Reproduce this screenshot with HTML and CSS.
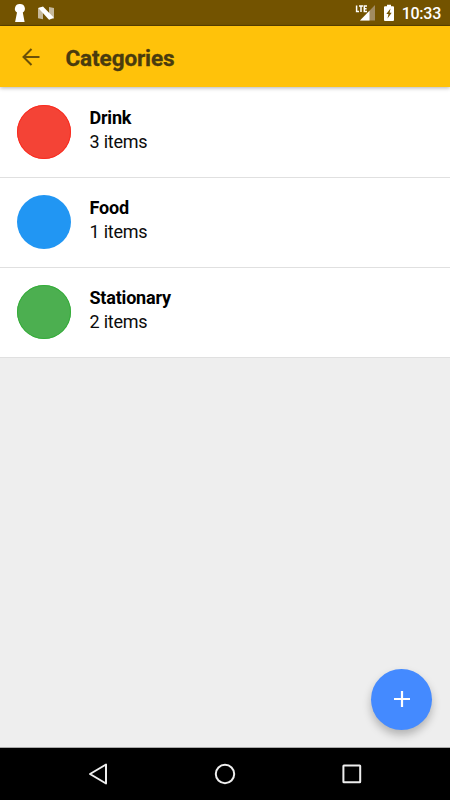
FILE: index.html
```html
<!DOCTYPE html>
<html lang="en">
<head>
<meta charset="utf-8">
<title>Categories</title>
<link rel="stylesheet" href="styles.css">
</head>
<body>
<div class="screen">
  <div class="status">
    <svg class="notices" width="60" height="26" viewBox="0 0 60 26">
      <path fill="#fff" d="M20 4a4.700 4.700 0 0 1 2.800 8.600L24.600 22H15.100L17 12.600A4.700 4.700 0 0 1 20 4z"/>
      <path fill="#c6b99c" d="M38 8l5-1v12.300l-5-1zM49 7l5 1v10.600l-5 1z"/>
      <path fill="#fff" d="M38.300 8L43 6.400 53.700 17.500 49 19.800z"/>
    </svg>
    <div class="indicators">
      <svg width="46" height="26" viewBox="0 0 46 26">
        <path fill="#a18b61" d="M21 5v15.500H6z"/>
        <path fill="#fff" d="M15.500 10.700v9.800H6z"/>
        <path fill="none" stroke="#fff" stroke-width="1.500" d="M2.600 5.500v6H5M5 6.100h4M7 6v6M13 6.100h-2.700v5.300H13M10.300 8.700h2.300"/>
        <path fill="#fff" fill-rule="evenodd" d="M33 4.700h4v1.500h2q1 0 1 1v12.800q0 1-1 1h-8q-1 0-1-1V7.200q0-1 1-1h2zM36.500 8.500L32.300 14h2.200l-1 4.500 4.200-5.700h-2.100z"/>
      </svg>
      <span class="clock">10:33</span>
    </div>
  </div>
  <header class="toolbar">
    <svg width="18" height="18" viewBox="0 0 18 18" fill="none" stroke="#6b5008" stroke-width="2"><path d="M17.500 9H1.700M9.500 1L1.500 9l8 8"/></svg>
    <h1 class="title">Categories</h1>
  </header>
  <main class="content">
    <ul class="list">
      <li class="row"><span class="dot red"></span><div class="label"><div class="name">Drink</div><div class="count">3 items</div></div></li>
      <li class="row"><span class="dot blue"></span><div class="label"><div class="name">Food</div><div class="count">1 items</div></div></li>
      <li class="row"><span class="dot green"></span><div class="label"><div class="name">Stationary</div><div class="count">2 items</div></div></li>
    </ul>
    <button class="fab" aria-label="Add">
      <svg width="16" height="16" viewBox="0 0 16 16" stroke="#fff" stroke-width="2.200"><path d="M8 0v16M0 8h16"/></svg>
    </button>
  </main>
  <nav class="navbar">
    <svg width="24" height="24" viewBox="0 0 24 24"><path d="M20 2.500v19L4 12z"/></svg>
    <svg width="24" height="24" viewBox="0 0 24 24"><circle cx="12" cy="12" r="9.200"/></svg>
    <svg width="24" height="24" viewBox="0 0 24 24"><rect x="3.400" y="3.400" width="16.800" height="16.800" rx=".5"/></svg>
  </nav>
</div>
</body>
</html>
```
FILE: styles.css
```css
* { box-sizing: border-box; }
body { margin: 0; font-family: Roboto, "Liberation Sans", sans-serif; }
.screen { width: 450px; height: 800px; display: flex; flex-direction: column; background: #eee; overflow: hidden; }
.status { height: 26px; flex: none; background: #735300; border-bottom: 1px solid #5c4200; display: flex; justify-content: space-between; color: #fff; }
.notices, .indicators svg { display: block; flex: none; }
.indicators { display: flex; padding-right: 9px; }
.indicators svg { margin-right: 2px; }
.clock { font-size: 16px; font-weight: 500; line-height: 28px; letter-spacing: -0.250px; }
.toolbar { height: 61px; flex: none; background: #ffc20a; display: flex; align-items: center; padding-left: 22px; gap: 25.500px; box-shadow: 0 1px 4px rgba(0, 0, 0, .3); z-index: 1; }
.title { margin: 3px 0 0; font-size: 22.500px; line-height: 28px; font-weight: 700; letter-spacing: -0.100px; color: #493b0e; -webkit-text-stroke: .3px #493b0e; }
.content { flex: 1; position: relative; }
.list { list-style: none; margin: 0; padding: 1px 0 0; background: #fff; }
.row { height: 90px; display: flex; padding: 17px 17.400px 0; gap: 18.100px; border-bottom: 1px solid #e0e0e0; }
.dot { width: 54px; height: 54px; border-radius: 50%; flex: none; }
.red { background: #f44336; box-shadow: inset 0 0 0 1px #fa2c20; }
.blue { background: #2196f3; }
.green { background: #4caf50; box-shadow: inset 0 0 0 1px #35ad3a; }
.label { padding-top: 1px; color: #0b0b0b; font-size: 18px; line-height: 24px; }
.name { font-weight: 700; letter-spacing: -0.200px; color: #000; }
.count { letter-spacing: -0.220px; }
.fab { position: absolute; right: 18px; bottom: 17.500px; width: 61px; height: 61px; padding: 0; border: 0; border-radius: 50%; background: #448aff; display: flex; align-items: center; justify-content: center; box-shadow: 0 5px 9px rgba(0, 0, 0, .25); }
.navbar { height: 53px; flex: none; background: #000; border-top: 1px solid #aaa; display: flex; align-items: center; justify-content: space-between; padding: 0 86px; z-index: 1; }
.navbar svg { fill: none; stroke: #eee; stroke-width: 2; stroke-linejoin: round; }
```
